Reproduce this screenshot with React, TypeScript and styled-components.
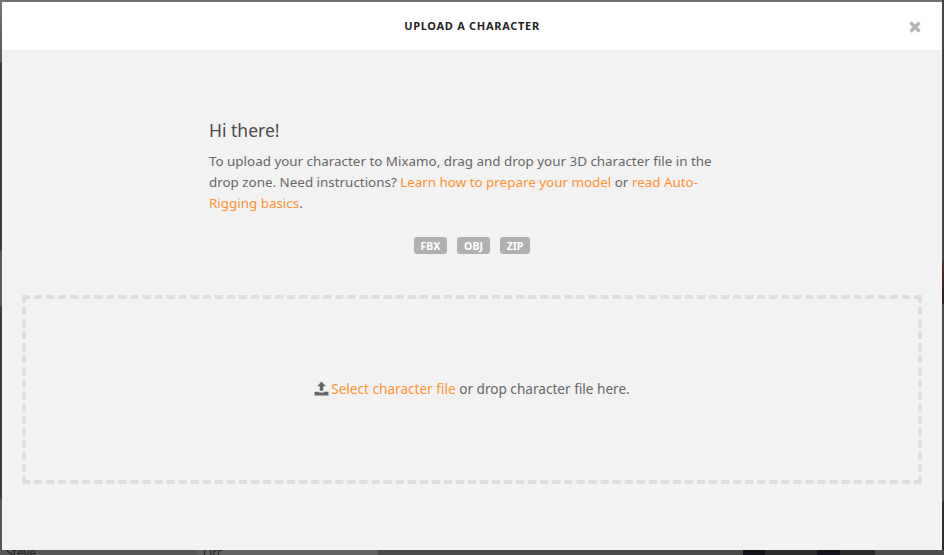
import React from 'react';
import styled, { createGlobalStyle } from 'styled-components';

const GlobalStyle = createGlobalStyle`
  html, body {
    margin: 0;
    padding: 0;
    height: 100%;
    overflow: hidden;
    background: #4a4a4a;
  }
`;

const formats = [
  { label: 'FBX', width: 33 },
  { label: 'OBJ', width: 33 },
  { label: 'ZIP', width: 30 },
];

const backdropCells = [
  { width: 197, color: '#565656', name: 'Steve' },
  { width: 181, color: '#626262', name: 'Orc' },
  { width: 365, color: '#494949' },
  { width: 22, color: '#14121a' },
  { width: 52, color: '#2a2a2a' },
  { width: 23, color: '#14121a' },
  { width: 35, color: '#2a2a2a' },
  { width: 69, color: '#4c4c4c' },
];

export default function App(): JSX.Element {
  return (
    <>
      <GlobalStyle />
      <Page>
        <Backdrop>
          {backdropCells.map((cell, index) => (
            <BackdropCell key={index} $width={cell.width} $color={cell.color}>
              {cell.name}
            </BackdropCell>
          ))}
        </Backdrop>
        <Modal>
          <Header>
            <Title>UPLOAD A CHARACTER</Title>
            <CloseButton aria-label="Close">
              <svg width="12" height="12" viewBox="0 0 12 12">
                <path d="M1.5 1.5l9 9M10.5 1.5l-9 9" stroke="#b4b4b4" strokeWidth="3.2" />
              </svg>
            </CloseButton>
          </Header>
          <Body>
            <Intro>
              <Heading>Hi there!</Heading>
              <Text>
                To upload your character to Mixamo, drag and drop your 3D character file in the drop
                zone. Need instructions? <Link>Learn how to prepare your model</Link> or{' '}
                <Link>read Auto-Rigging basics</Link>.
              </Text>
            </Intro>
            <Formats>
              {formats.map((format) => (
                <Format key={format.label} $width={format.width}>
                  {format.label}
                </Format>
              ))}
            </Formats>
            <DropZone>
              <UploadIcon width="15" height="15" viewBox="0 0 14 14">
                <path d="M7 0.5L11 5H8.6v4H5.4V5H3z" fill="#666" />
                <path d="M0.5 10H4.6v0.8h4.8V10h4.1v3.6H0.5z" fill="#666" />
              </UploadIcon>
              <Link>Select character file</Link>&nbsp;or drop character file here.
            </DropZone>
          </Body>
        </Modal>
      </Page>
    </>
  );
}

const Page = styled.div`
  position: relative;
  box-sizing: border-box;
  width: 944px;
  height: 555px;
  padding: 2px 2px 5px;
  background:
    linear-gradient(
        #444 0,
        #444 260px,
        #4a3228 262px,
        #2a1c16 303px,
        #4a4a4a 305px,
        #4a4a4a 500px,
        #2c2c2c 502px
      )
      right / 2px 100% no-repeat,
    linear-gradient(
        #747474 0,
        #5a5a5a 62px,
        #3c3c3c 63px,
        #3c3c3c 250px,
        #5c5c5c 252px,
        #5c5c5c 305px,
        #3c3c3c 307px,
        #3c3c3c 498px,
        #565656 500px
      )
      left / 2px 100% no-repeat,
    #6f6f6f;
  font-family: 'Noto Sans', 'Open Sans', sans-serif;
  overflow: hidden;
`;

const Backdrop = styled.div`
  position: absolute;
  left: 0;
  right: 0;
  bottom: 0;
  height: 5px;
  display: flex;
  overflow: hidden;
`;

const BackdropCell = styled.span<{ $width: number; $color: string }>`
  flex: none;
  box-sizing: border-box;
  width: ${(props) => props.$width}px;
  height: 5px;
  padding-left: 6px;
  background: ${(props) => props.$color};
  font-size: 12px;
  line-height: 5px;
  color: #222;
`;

const Modal = styled.div`
  position: relative;
  display: flex;
  flex-direction: column;
  height: 100%;
  background: #f2f2f2;
`;

const Header = styled.header`
  position: relative;
  flex: none;
  display: flex;
  align-items: center;
  justify-content: center;
  height: 48px;
  padding-bottom: 2px;
  box-sizing: border-box;
  background: #fff;
`;

const Title = styled.h1`
  margin: 0;
  font-size: 11px;
  font-weight: 700;
  letter-spacing: 0.7px;
  color: #1f1f1f;
`;

const CloseButton = styled.button`
  position: absolute;
  top: 19px;
  right: 21px;
  display: flex;
  padding: 0;
  background: none;
  border: none;
`;

const Body = styled.div`
  display: flex;
  flex-direction: column;
  padding: 0 20px;
`;

const Intro = styled.div`
  width: 520px;
  margin: 68px 0 0 187px;
`;

const Heading = styled.h2`
  margin: 0 0 9px;
  font-size: 17.5px;
  font-weight: 400;
  line-height: 24px;
  color: #4a4a4a;
`;

const Text = styled.p`
  margin: 0;
  font-size: 13.4px;
  line-height: 21px;
  color: #666;
`;

const Link = styled.a`
  color: #ff9232;
  cursor: pointer;
`;

const Formats = styled.div`
  display: flex;
  justify-content: center;
  gap: 10px;
  margin-top: 23px;
`;

const Format = styled.span<{ $width: number }>`
  display: flex;
  align-items: center;
  justify-content: center;
  width: ${(props) => props.$width}px;
  height: 17px;
  border-radius: 3px;
  background: #b0b0b0;
  font-size: 10.5px;
  font-weight: 700;
  color: #fff;
`;

const DropZone = styled.div`
  display: flex;
  align-items: center;
  justify-content: center;
  box-sizing: border-box;
  height: 189px;
  margin-top: 41px;
  padding-bottom: 2px;
  border: 4px dashed #dedede;
  font-size: 13.6px;
  color: #666;
`;

const UploadIcon = styled.svg`
  margin-right: 2px;
`;
